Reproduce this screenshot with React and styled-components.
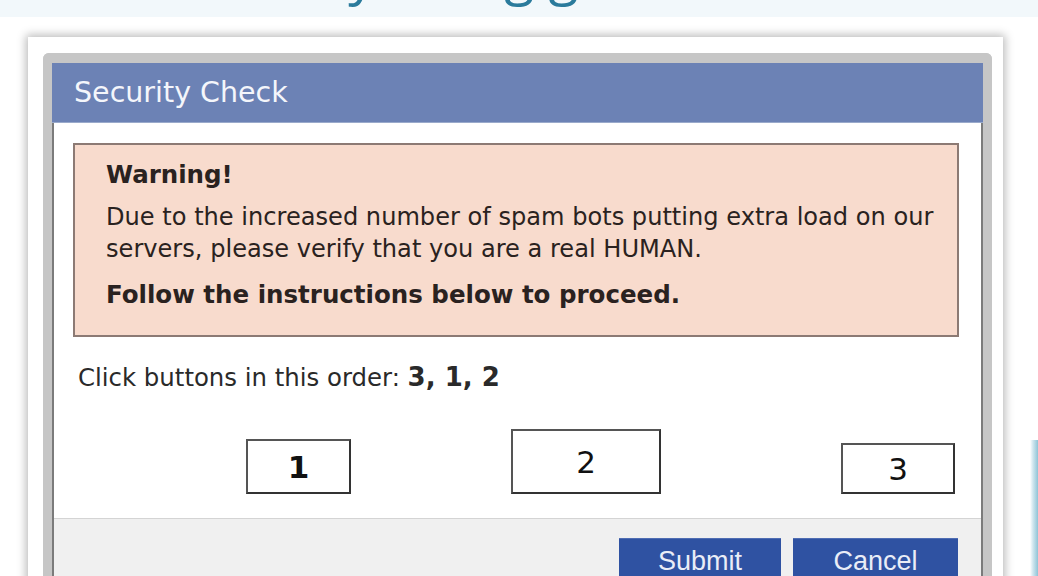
import React from "react";
import styled, { createGlobalStyle } from "styled-components";

const Global = createGlobalStyle`
  html, body { margin: 0; padding: 0; background: #fff; }
  body { overflow: hidden; }
`;

const Page = styled.div`
  width: 1038px;
  height: 576px;
  overflow: hidden;
  display: flex;
  flex-direction: column;
  background:
    linear-gradient(90deg, rgba(255,255,255,0) 1030px, #cfe6ef 1033px, #8fc3d6 1038px) 0 440px / 100% 136px no-repeat,
    #fff;
`;

const TopBand = styled.div`
  height: 17px;
  flex: none;
  background: #f2f8fb;
  overflow: hidden;
  display: flex;
  align-items: flex-end;
  justify-content: center;
  padding-right: 206px;
`;

const SlideTitle = styled.h1`
  margin: 0;
  font-family: "Open Sans", sans-serif;
  font-weight: 400;
  font-size: 55px;
  line-height: 89px;
  color: #2b7b9c;
  white-space: nowrap;
`;

const Stage = styled.div`
  flex: 1;
  padding: 20px 0 0 28px;
`;

const Frame = styled.div`
  width: 975px;
  height: 560px;
  box-sizing: border-box;
  background: #fff;
  padding: 16px 11px 0 15px;
  box-shadow: 0 0 9px 2px rgba(0, 0, 0, 0.28);
`;

const Dialog = styled.div`
  width: 949px;
  box-sizing: border-box;
  border: 9px solid #c6c6c6;
  border-top-width: 10px;
  border-bottom: none;
  border-radius: 6px 6px 0 0;
  background: #fff;
`;

const Header = styled.div`
  height: 59px;
  background: #6c82b5;
  border-bottom: 1px solid #9aaacb;
  display: flex;
  align-items: center;
  padding-left: 22px;
  font-family: "DejaVu Sans", sans-serif;
  font-size: 28.5px;
  color: #f4f6fb;
`;

const Body = styled.div`
  border-left: 2px solid #7b7b7b;
  border-right: 2px solid #7b7b7b;
  padding: 20px 22px 0 19px;
`;

const Warning = styled.div`
  height: 194px;
  box-sizing: border-box;
  background: #f8dbcd;
  border: 2px solid #8c7a74;
  padding: 16px 10px 0 31px;
  font-family: "DejaVu Sans", sans-serif;
  font-size: 24.5px;
  color: #2a2220;
  white-space: nowrap;
`;

const WarnTitle = styled.div`
  font-weight: bold;
  line-height: 28px;
  margin-bottom: 12px;
`;

const WarnText = styled.p`
  margin: 0;
  line-height: 32px;
  font-size: ${(p) => (p.$bold ? "24.5px" : "24.1px")};
  font-weight: ${(p) => (p.$bold ? "bold" : "normal")};
  margin-top: ${(p) => p.$top || 0}px;
`;

const Instruction = styled.div`
  margin-top: 26px;
  padding-left: 5px;
  font-family: "DejaVu Sans", sans-serif;
  font-size: 24.4px;
  line-height: 28px;
  color: #2a2a2a;
  b { font-size: 26px; }
`;

const ButtonRow = styled.div`
  display: flex;
  align-items: flex-end;
  height: 65px;
  margin-top: 37px;
  margin-left: -19px;
  padding-left: 192px;
`;

const NumButton = styled.div`
  width: ${(p) => p.$w}px;
  height: ${(p) => p.$h}px;
  margin-left: ${(p) => p.$gap || 0}px;
  box-sizing: border-box;
  border: 2px solid #333;
  border-top-color: #555;
  border-left-color: #555;
  background: #fff;
  display: flex;
  align-items: center;
  justify-content: center;
  font-family: "DejaVu Sans", sans-serif;
  font-size: 31px;
  font-weight: ${(p) => (p.$bold ? "bold" : "normal")};
  color: #111;
`;

const Footer = styled.div`
  margin: 24px -22px 0 -19px;
  border-top: 1px solid #d4d4d4;
  background: #f0f0f0;
  height: 70px;
  display: flex;
  justify-content: flex-end;
  align-items: flex-start;
  gap: 12px;
  padding: 19px 23px 0 0;
`;

const ActionButton = styled.div`
  width: ${(p) => p.$w}px;
  height: 46px;
  background: #2f52a2;
  border-top: 1px solid #4f6db3;
  color: #e9edf7;
  font-family: "Liberation Sans", Arial, sans-serif;
  font-size: 27px;
  display: flex;
  justify-content: center;
  padding-top: 7px;
  box-sizing: border-box;
`;

export default function App() {
  return (
    <Page>
      <Global />
      <TopBand>
        <SlideTitle>Learn by doing good</SlideTitle>
      </TopBand>
      <Stage>
        <Frame>
          <Dialog>
            <Header>Security Check</Header>
            <Body>
              <Warning>
                <WarnTitle>Warning!</WarnTitle>
                <WarnText>
                  Due to the increased number of spam bots putting extra load on our
                  <br />
                  servers, please verify that you are a real HUMAN.
                </WarnText>
                <WarnText $bold $top={14}>Follow the instructions below to proceed.</WarnText>
              </Warning>
              <Instruction>
                Click buttons in this order: <b>3, 1, 2</b>
              </Instruction>
              <ButtonRow>
                <NumButton $w={105} $h={55} $bold>1</NumButton>
                <NumButton $w={150} $h={65} $gap={160}>2</NumButton>
                <NumButton $w={114} $h={51} $gap={180}>3</NumButton>
              </ButtonRow>
              <Footer>
                <ActionButton $w={162}>Submit</ActionButton>
                <ActionButton $w={165}>Cancel</ActionButton>
              </Footer>
            </Body>
          </Dialog>
        </Frame>
      </Stage>
    </Page>
  );
}
